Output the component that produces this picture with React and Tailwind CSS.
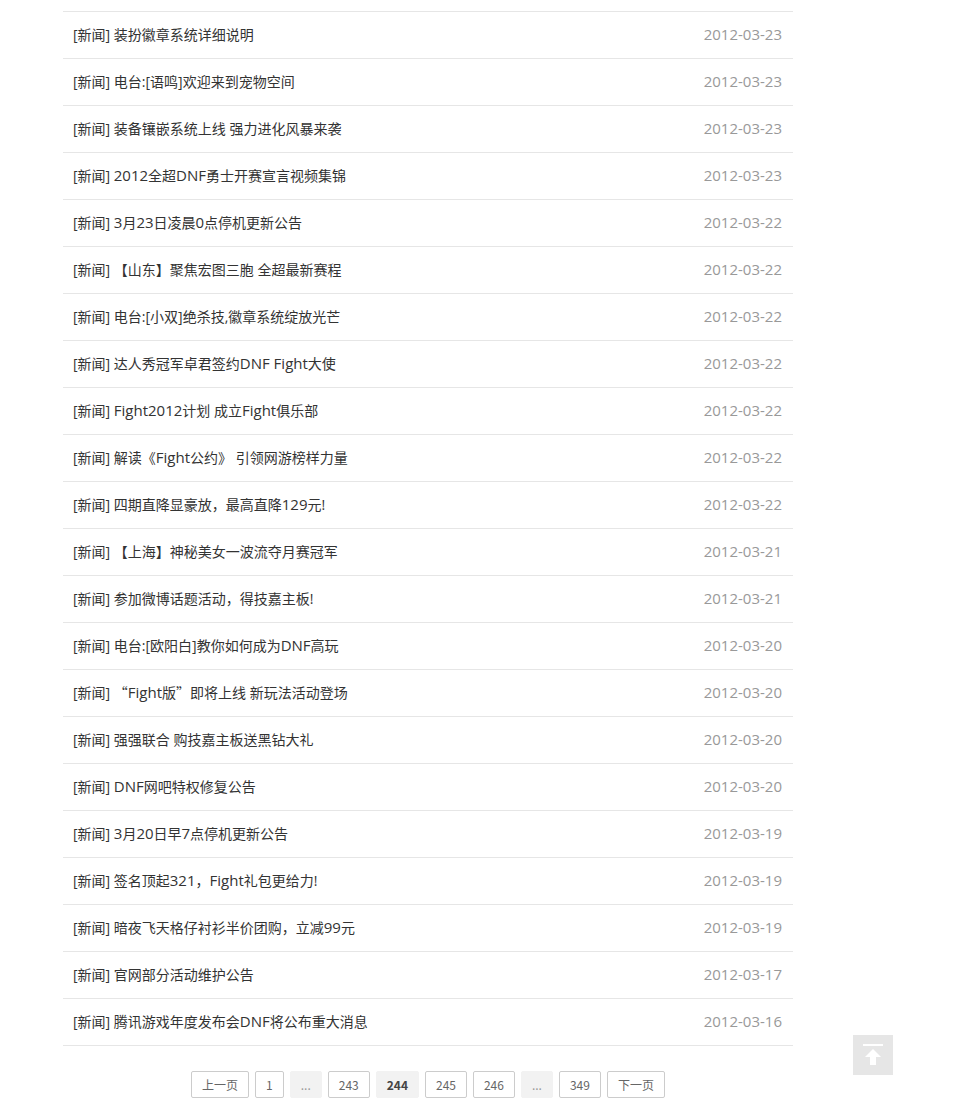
import React from "react";

const news = [
  ["装扮徽章系统详细说明", "2012-03-23"],
  ["电台:[语鸣]欢迎来到宠物空间", "2012-03-23"],
  ["装备镶嵌系统上线 强力进化风暴来袭", "2012-03-23"],
  ["2012全超DNF勇士开赛宣言视频集锦", "2012-03-23"],
  ["3月23日凌晨0点停机更新公告", "2012-03-22"],
  ["【山东】聚焦宏图三胞 全超最新赛程", "2012-03-22"],
  ["电台:[小双]绝杀技,徽章系统绽放光芒", "2012-03-22"],
  ["达人秀冠军卓君签约DNF Fight大使", "2012-03-22"],
  ["Fight2012计划 成立Fight俱乐部", "2012-03-22"],
  ["解读《Fight公约》 引领网游榜样力量", "2012-03-22"],
  ["四期直降显豪放，最高直降129元!", "2012-03-22"],
  ["【上海】神秘美女一波流夺月赛冠军", "2012-03-21"],
  ["参加微博话题活动，得技嘉主板!", "2012-03-21"],
  ["电台:[欧阳白]教你如何成为DNF高玩", "2012-03-20"],
  ["“Fight版”即将上线 新玩法活动登场", "2012-03-20"],
  ["强强联合 购技嘉主板送黑钻大礼", "2012-03-20"],
  ["DNF网吧特权修复公告", "2012-03-20"],
  ["3月20日早7点停机更新公告", "2012-03-19"],
  ["签名顶起321，Fight礼包更给力!", "2012-03-19"],
  ["暗夜飞天格仔衬衫半价团购，立减99元", "2012-03-19"],
  ["官网部分活动维护公告", "2012-03-17"],
  ["腾讯游戏年度发布会DNF将公布重大消息", "2012-03-16"],
];

const pages = [
  { label: "上一页" },
  { label: "1" },
  { label: "...", dots: true },
  { label: "243" },
  { label: "244", current: true },
  { label: "245" },
  { label: "246" },
  { label: "...", dots: true },
  { label: "349" },
  { label: "下一页" },
];

// latin runs are a touch wider in the original, quotes come from the CJK font
const Title = ({ text }) =>
  text.split(/([“”]|[A-Za-z0-9]+(?: [A-Za-z0-9]+)*)/).map((part, i) => {
    if (part === "“" || part === "”")
      return (
        <span key={i} className="font-['Noto_Sans_CJK_SC']">
          {part}
        </span>
      );
    if (/^[A-Za-z0-9]/.test(part))
      return (
        <span key={i} className="text-[15px]">
          {part}
        </span>
      );
    return part;
  });

export default function App() {
  return (
    <div className="min-h-[1114px] bg-white font-['Open_Sans','Noto_Sans_CJK_SC',sans-serif]">
      <ul className="ml-[63px] mt-[11px] w-[730px] border-t border-[#e6e6e6]">
        {news.map(([title, date], i) => (
          <li
            key={i}
            className="flex h-[47px] items-center justify-between border-b border-[#e6e6e6] pb-[1px] pl-[10px] pr-[11px] text-[14px]"
          >
            <a className="cursor-pointer text-[#333]">
              [新闻] <Title text={title} />
            </a>
            <span className="text-[15px] text-[#999]">{date}</span>
          </li>
        ))}
      </ul>

      {/* Pagination */}
      <div className="ml-[63px] mt-[25px] flex w-[730px] justify-center gap-[6px] font-['Noto_Sans_CJK_SC',sans-serif] text-[12px]">
        {pages.map((p, i) => (
          <span
            key={i}
            className={`flex h-[27px] items-center rounded-[2px] border px-[10px] ${
              p.dots
                ? "border-[#f2f2f2] bg-[#f2f2f2] text-[#999]"
                : p.current
                ? "border-[#f2f2f2] bg-[#f2f2f2] font-bold text-[#444]"
                : "cursor-pointer border-[#ccc] bg-white text-[#666]"
            }`}
          >
            {p.label}
          </span>
        ))}
      </div>

      {/* Back to top */}
      <button className="fixed bottom-[39px] right-[60px] flex h-[40px] w-[40px] items-center justify-center bg-[#e6e6e6]">
        <svg width="20" height="22" viewBox="0 0 20 22" fill="#fff">
          <rect x="0" y="0" width="20" height="2" />
          <polygon points="10,5 18,13 13,13 13,21 7,21 7,13 2,13" />
        </svg>
      </button>
    </div>
  );
}
